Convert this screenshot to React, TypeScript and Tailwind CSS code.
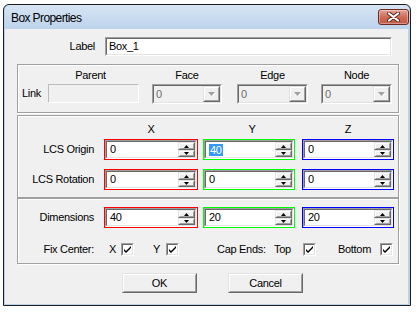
import React from 'react';

const sunkenOuter = 'border border-t-[#a0a0a0] border-l-[#a0a0a0] border-b-white border-r-white';
const sunkenInner = 'border border-t-[#696969] border-l-[#696969] border-b-[#e3e3e3] border-r-[#e3e3e3]';
const raisedOuter = 'border border-t-[#e3e3e3] border-l-[#e3e3e3] border-b-[#696969] border-r-[#696969]';
const raisedInner = 'border border-t-white border-l-white border-b-[#a0a0a0] border-r-[#a0a0a0]';
const etched = 'border border-[#a0a0a0] shadow-[inset_1px_1px_0_#ffffff,1px_1px_0_#ffffff]';

// classic 3D sunken frame
const Sunken: React.FC<{ className?: string; inner?: string; children?: React.ReactNode }> = ({ className = '', inner = 'bg-white', children }) => (
  <div className={`${sunkenOuter} ${className}`}>
    <div className={`${sunkenInner} ${inner} flex h-full w-full items-stretch`}>{children}</div>
  </div>
);

const Raised: React.FC<{ className?: string; children?: React.ReactNode }> = ({ className = '', children }) => (
  <div className={`${raisedOuter} ${className}`}>
    <div className={`${raisedInner} flex h-full w-full items-center justify-center bg-[#f0f0f0]`}>{children}</div>
  </div>
);

const SpinArrow: React.FC<{ up?: boolean }> = ({ up }) => (
  <svg width="5" height="3" viewBox="0 0 5 3">
    <path d={up ? 'M2.5 0 L5 3 L0 3 Z' : 'M0 0 L5 0 L2.5 3 Z'} fill="#000" />
  </svg>
);

interface SpinProps {
  value: string;
  frame: string; // full tailwind classes for width + colour
  selected?: boolean;
}

// spin edit wrapped in a 1px coloured frame
const Spin: React.FC<SpinProps> = ({ value, frame, selected }) => (
  <div className={`h-[21px] p-[1px] ${frame}`}>
    <Sunken className="h-full w-full">
      <div className="flex flex-1 items-center pl-[3px]">
        {selected ? (
          <span className="bg-[#3399ff] px-[1px] leading-[12px] text-white">{value}</span>
        ) : (
          <span>{value}</span>
        )}
      </div>
      <div className="flex w-[17px] flex-col">
        <Raised className="h-[8px]">
          <SpinArrow up />
        </Raised>
        <Raised className="h-[7px]">
          <SpinArrow />
        </Raised>
      </div>
    </Sunken>
  </div>
);

const Combo: React.FC<{ width: string }> = ({ width }) => (
  <Sunken className={`h-[20px] ${width}`} inner="bg-[#f0f0f0]">
    <div className="flex flex-1 items-center pl-[2px] text-[#6d6d6d]">0</div>
    <Raised className="h-full w-[17px]">
      <svg width="8" height="5" viewBox="0 0 8 5">
        <path d="M1 1 L8 1 L4.5 5 Z" fill="#ffffff" />
        <path d="M0 0 L7 0 L3.5 4 Z" fill="#a0a0a0" />
      </svg>
    </Raised>
  </Sunken>
);

const Check: React.FC = () => (
  <Sunken className="h-[13px] w-[13px]">
    <svg width="9" height="9" viewBox="0 0 9 9" className="m-auto">
      <path d="M1 4 L3 6 L8 1 L8 3 L3 8 L1 6 Z" fill="#000" />
    </svg>
  </Sunken>
);

const Header: React.FC<{ w: string; children?: React.ReactNode; className?: string }> = ({ w, children, className = '' }) => (
  <div className={`${w} h-[14px] text-center leading-[14px] ${className}`}>{children}</div>
);

export default function App() {
  return (
    <div className="h-[312px] w-[417px] overflow-hidden bg-white font-['Liberation_Sans',Arial,sans-serif] text-[11px] tracking-[-0.3px] text-black">
      {/* window */}
      <div className="ml-[3px] mt-[4px] flex h-[302px] w-[408px] flex-col rounded-t-[6px] border border-[#1e1e1e] bg-[#b9d1ea] pb-[1px] pl-[1px] pr-[1px]">
        {/* title bar */}
        <div className="flex h-[24px] shrink-0 items-start rounded-t-[5px] bg-gradient-to-b from-[#d7e5f4] to-[#bcd3eb]">
          <div className="ml-[6px] mt-[5px] text-[12px] leading-[16px] tracking-[-0.6px]">Box Properties</div>
          <div className="ml-auto mt-[4px] flex h-[16px] w-[31px] items-center justify-center rounded-[3px] border border-[#6e2a20] bg-gradient-to-b from-[#e4a597] via-[#cf6a55] to-[#c35a45] shadow-[inset_0_0_0_1px_rgba(255,255,255,0.35)]">
            <svg width="13" height="10" viewBox="0 0 13 10">
              <path d="M2 1.5 L11 8.5 M11 1.5 L2 8.5" stroke="#5a2a24" strokeWidth="4" strokeLinecap="round" />
              <path d="M2 1.5 L11 8.5 M11 1.5 L2 8.5" stroke="#ffffff" strokeWidth="2.2" strokeLinecap="round" />
            </svg>
          </div>
        </div>

        {/* client area */}
        <div className="mr-[1px] flex flex-1 flex-col bg-[#f0f0f0] pt-[8px]">
          {/* Label row */}
          <div className="flex h-[19px] items-center">
            <div className="w-[90px] text-right">Label</div>
            <Sunken className="ml-[10px] h-[19px] w-[287px]">
              <div className="flex items-center pl-[2px]">Box_1</div>
            </Sunken>
          </div>

          {/* Link group */}
          <div className={`ml-[12px] mt-[8px] h-[49px] w-[382px] ${etched} pl-[4px] pt-[3px]`}>
            <div className="flex">
              <Header w="w-[26px]" />
              <Header w="w-[91px]" className="pr-[6px]">Parent</Header>
              <Header w="ml-[13px] w-[70px]">Face</Header>
              <Header w="ml-[15px] w-[71px]">Edge</Header>
              <Header w="ml-[13px] w-[71px]">Node</Header>
            </div>
            <div className="mt-[2px] flex items-start">
              <div className="flex h-[19px] w-[26px] items-center">Link</div>
              <div className="h-[19px] w-[91px] border border-t-[#bcbcbc] border-l-[#bcbcbc] border-b-white border-r-white bg-[#f0f0f0]" />
              <div className="ml-[13px]">
                <Combo width="w-[70px]" />
              </div>
              <div className="ml-[15px]">
                <Combo width="w-[71px]" />
              </div>
              <div className="ml-[13px]">
                <Combo width="w-[71px]" />
              </div>
            </div>
          </div>

          {/* LCS group */}
          <div className={`ml-[12px] mt-[2px] h-[83px] w-[382px] ${etched} pt-[6px]`}>
            <div className="flex">
              <div className="w-[86px]" />
              <Header w="w-[94px]">X</Header>
              <Header w="ml-[5px] w-[92px]" className="pl-[6px]">Y</Header>
              <Header w="ml-[7px] w-[92px]">Z</Header>
            </div>
            <div className="mt-[3px] flex items-center">
              <div className="w-[76px] text-right">LCS Origin</div>
              <div className="ml-[10px]">
                <Spin value="0" frame="w-[94px] bg-[#ff0000]" />
              </div>
              <div className="ml-[5px]">
                <Spin value="40" frame="w-[92px] bg-[#00ff00]" selected />
              </div>
              <div className="ml-[7px]">
                <Spin value="0" frame="w-[92px] bg-[#0000ff]" />
              </div>
            </div>
            <div className="mt-[9px] flex items-center">
              <div className="w-[76px] text-right">LCS Rotation</div>
              <div className="ml-[10px]">
                <Spin value="0" frame="w-[94px] bg-[#ff0000]" />
              </div>
              <div className="ml-[5px]">
                <Spin value="0" frame="w-[92px] bg-[#00ff00]" />
              </div>
              <div className="ml-[7px]">
                <Spin value="0" frame="w-[92px] bg-[#0000ff]" />
              </div>
            </div>
          </div>

          {/* Dimensions group */}
          <div className={`ml-[12px] h-[66px] w-[382px] ${etched} pt-[8px]`}>
            <div className="flex items-center">
              <div className="w-[76px] text-right">Dimensions</div>
              <div className="ml-[10px]">
                <Spin value="40" frame="w-[94px] bg-[#ff0000]" />
              </div>
              <div className="ml-[5px]">
                <Spin value="20" frame="w-[92px] bg-[#00ff00]" />
              </div>
              <div className="ml-[7px]">
                <Spin value="20" frame="w-[92px] bg-[#0000ff]" />
              </div>
            </div>
            <div className="mt-[13px] flex items-center">
              <div className="w-[76px] text-right">Fix Center:</div>
              <div className="ml-[15px] w-[12px]">X</div>
              <Check />
              <div className="ml-[19px] w-[13px]">Y</div>
              <Check />
              <div className="ml-[38px] w-[57px]">Cap Ends:</div>
              <div className="w-[29px]">Top</div>
              <Check />
              <div className="ml-[22px] w-[42px]">Bottom</div>
              <Check />
            </div>
          </div>

          {/* buttons */}
          <div className="mt-[9px] flex">
            <Raised className="ml-[117px] h-[20px] w-[75px]">
              <span>OK</span>
            </Raised>
            <Raised className="ml-[31px] h-[20px] w-[75px]">
              <span>Cancel</span>
            </Raised>
          </div>
        </div>
      </div>
    </div>
  );
}
